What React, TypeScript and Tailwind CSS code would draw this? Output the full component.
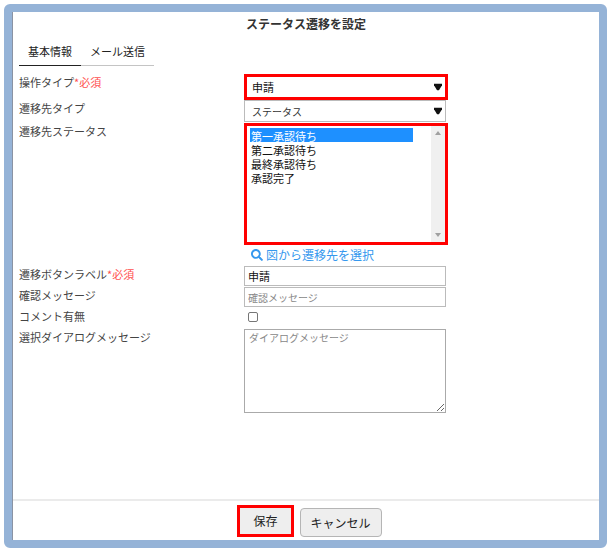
import { useState } from 'react';
import type { ReactNode } from 'react';
import { FaSearch } from 'react-icons/fa';

const STATUSES = ['第一承認待ち', '第二承認待ち', '最終承認待ち', '承認完了'];
const TABS = ['基本情報', 'メール送信'];

interface RowProps {
  id: string;
  label: string;
  required?: boolean;
  className: string;
  children: ReactNode;
}

function Row({ id, label, required, className, children }: RowProps) {
  return (
    <div className={`grid grid-cols-[225px_1fr] items-start ${className}`}>
      <label htmlFor={id} className="leading-4">
        {label}
        {required && <span className="text-[#ff5050]">*必須</span>}
      </label>
      {children}
    </div>
  );
}

function Caret() {
  return (
    <svg viewBox="0 0 8 7" className="pointer-events-none absolute right-[3px] top-1/2 h-[7px] w-2 -translate-y-1/2">
      <path d="M0 0h8v1.8L4.8 7H3.2L0 1.8z" fill="#111" />
    </svg>
  );
}

export default function App() {
  const [tab, setTab] = useState(TABS[0]);
  const [targets, setTargets] = useState([STATUSES[0]]);
  const [buttonLabel, setButtonLabel] = useState('申請');

  return (
    <div className="flex min-h-screen flex-col bg-white py-1 pl-1 pr-[3px] font-['Noto_Sans_CJK_JP',sans-serif] text-[11px] text-[#444]">
      <div className="flex grow flex-col rounded-md border-8 border-[#95b3d7]">
        <main className="flex grow flex-col border-l border-[#8a93a3]">
          <h1 className="text-center text-[12px] font-bold leading-6 text-[#333]">ステータス遷移を設定</h1>

          <form className="grow px-1.5" onSubmit={e => e.preventDefault()}>
            {/* Tabs */}
            <div className="mb-2 flex h-[30px]">
              {TABS.map(t => (
                <button
                  key={t}
                  type="button"
                  onClick={() => setTab(t)}
                  className={`px-[9px] leading-4 text-[#222] ${t === tab ? 'border-b border-[#222]' : 'border-b border-[#c4c4c4]'}`}
                >
                  {t}
                </button>
              ))}
            </div>

            <Row id="action-type" label="操作タイプ" required className="h-[26px]">
              <div className="relative w-[204px] border-[3px] border-[#f00]">
                <select id="action-type" className="block h-5 w-full appearance-none bg-white pl-[5px] text-[#111]">
                  <option>申請</option>
                </select>
                <Caret />
              </div>
            </Row>

            <Row id="target-type" label="遷移先タイプ" className="h-[23px]">
              <div className="relative w-[202px] border border-[#bbb]">
                <select id="target-type" className="block h-5 w-full appearance-none bg-white pl-[7px] text-[10px] text-[#333]">
                  <option>ステータス</option>
                </select>
                <Caret />
              </div>
            </Row>

            <Row id="target-status" label="遷移先ステータス" className="h-[123px]">
              <div className="relative w-[204px] border-[3px] border-[#f00]">
                <select
                  id="target-status"
                  multiple
                  value={targets}
                  onChange={e => setTargets(Array.from(e.target.selectedOptions, o => o.value))}
                  className="block h-[116px] w-full overflow-hidden bg-white py-0.5 pl-[3px] pr-8 text-[#111]"
                >
                  {STATUSES.map(s => (
                    <option
                      key={s}
                      className="h-3.5 min-h-0 p-0 pl-px leading-2.5 checked:bg-[#1e90ff] checked:bg-[linear-gradient(#1e90ff,#1e90ff)] checked:text-white"
                    >
                      {s}
                    </option>
                  ))}
                </select>
                <div className="pointer-events-none absolute inset-y-0 right-0 flex w-3.5 flex-col items-center justify-between bg-[#f0f0f0] py-[5px]">
                  <svg viewBox="0 0 6 4" className="h-1 w-1.5"><path d="M0 4L3 0l3 4z" fill="#a0a0a0" /></svg>
                  <svg viewBox="0 0 6 4" className="h-1 w-1.5"><path d="M0 0h6L3 4z" fill="#a0a0a0" /></svg>
                </div>
              </div>
            </Row>

            <div className="ml-[225px] h-5 pl-[7px]">
              <a href="#diagram" className="flex w-fit items-center gap-[3px] text-[12px] leading-[18px] text-[#3598ee]">
                <FaSearch className="h-3 w-3" />
                図から遷移先を選択
              </a>
            </div>

            <Row id="button-label" label="遷移ボタンラベル" required className="h-[21px]">
              <input
                id="button-label"
                value={buttonLabel}
                onChange={e => setButtonLabel(e.target.value)}
                className="h-5 w-[202px] border border-[#bbb] px-[3px] text-[#111]"
              />
            </Row>

            <Row id="confirm-message" label="確認メッセージ" className="h-[21px]">
              <input
                id="confirm-message"
                placeholder="確認メッセージ"
                className="h-5 w-[202px] border border-[#bbb] px-[3px] text-[10px] placeholder-[#888]"
              />
            </Row>

            <Row id="has-comment" label="コメント有無" className="h-[21px]">
              <input
                id="has-comment"
                type="checkbox"
                className="ml-1 mt-1 h-2.5 w-2.5 appearance-none rounded-[2px] border border-[#767676] bg-white checked:bg-[#1e90ff]"
              />
            </Row>

            <Row id="dialog-message" label="選択ダイアログメッセージ" className="h-[85px]">
              <textarea
                id="dialog-message"
                placeholder="ダイアログメッセージ"
                className="h-[84px] w-[202px] border border-[#aaa] px-1 text-[10px] leading-4 placeholder-[#888]"
              />
            </Row>
          </form>

          <footer className="flex items-end justify-center gap-1.5 border-t-2 border-[#ebebeb] pb-[3px] pl-[7px] pt-1 text-[12px] text-[#222]">
            <button type="button" className="h-8 border-[3px] border-[#f00] bg-[#eee] px-[13px]">
              保存
            </button>
            <button type="button" className="h-[29px] rounded border border-[#b5b5b5] bg-[#eee] px-2.5">
              キャンセル
            </button>
          </footer>
        </main>
      </div>
    </div>
  );
}
